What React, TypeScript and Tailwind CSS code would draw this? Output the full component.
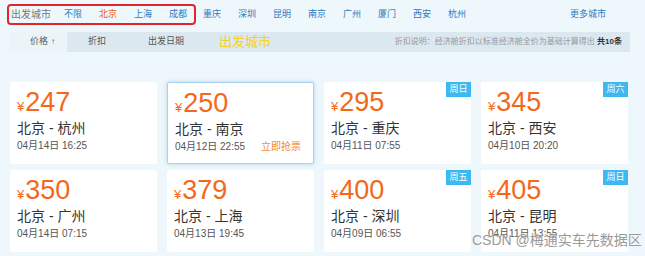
import React from "react";

const FONT = '"Liberation Sans", "Noto Sans CJK SC", sans-serif';

const boxedCities = [
  { name: "不限", active: false },
  { name: "北京", active: true },
  { name: "上海", active: false },
  { name: "成都", active: false },
];
const otherCities = ["重庆", "深圳", "昆明", "南京", "广州", "厦门", "西安", "杭州"];

type Flight = {
  price: number;
  route: string;
  date: string;
  badge?: string;
  highlight?: boolean;
};

const flights: Flight[] = [
  { price: 247, route: "北京 - 杭州", date: "04月14日 16:25" },
  { price: 250, route: "北京 - 南京", date: "04月12日 22:55", highlight: true },
  { price: 295, route: "北京 - 重庆", date: "04月11日 07:55", badge: "周日" },
  { price: 345, route: "北京 - 西安", date: "04月10日 20:20", badge: "周六" },
  { price: 350, route: "北京 - 广州", date: "04月14日 07:15" },
  { price: 379, route: "北京 - 上海", date: "04月13日 19:45" },
  { price: 400, route: "北京 - 深圳", date: "04月09日 06:55", badge: "周五" },
  { price: 405, route: "北京 - 昆明", date: "04月11日 13:55", badge: "周日" },
];

const FlightCard = ({ f }: { f: Flight }) => (
  <div
    className={[
      "relative h-[82px] bg-white rounded-[2px] px-[7px] pt-[7px]",
      f.highlight
        ? "border border-[#a8d3ee] shadow-[0_0_4px_rgba(120,180,220,0.5)]"
        : "",
    ].join(" ")}
  >
    {f.badge && (
      <span className="absolute right-0 top-0 w-[25px] h-[15px] bg-[#3db8f0] text-white text-[9px] leading-[15px] text-center">
        {f.badge}
      </span>
    )}
    <div className="flex items-baseline h-[27px] text-[#f2691c]">
      <span className="text-[13px] leading-none mr-[1px]">¥</span>
      <span
        className="text-[27px] leading-none"
        style={{ fontFamily: '"Liberation Sans Narrow", "Liberation Sans", sans-serif' }}
      >
        {f.price}
      </span>
    </div>
    <div className="mt-[3px] text-[14px] leading-[18px] text-[#333]">{f.route}</div>
    <div className="mt-[2px] flex items-center justify-between text-[10px] leading-[14px] text-[#555]">
      <span>{f.date}</span>
      {f.highlight && <span className="text-[#f0873a] mr-[5px]">立即抢票</span>}
    </div>
  </div>
);

export default function App() {
  return (
    <div
      className="w-[645px] h-[256px] overflow-hidden bg-[#eef7fc] relative"
      style={{ fontFamily: FONT }}
    >
      {/* city nav */}
      <div className="h-[32px] pl-[7px] pt-[4px] flex items-start text-[9px]">
        <div className="w-[189px] h-[21px] border-2 border-[#e3262b] rounded-[4px] flex items-center pl-[2px] shrink-0 overflow-hidden">
          <span className="w-[53px] shrink-0 text-[#777] text-[10px]">出发城市</span>
          {boxedCities.map((c) => (
            <span
              key={c.name}
              className={[
                "w-[35px] shrink-0",
                c.active ? "text-[#ef5a18]" : "text-[#2d7bc0]",
              ].join(" ")}
            >
              {c.name}
            </span>
          ))}
        </div>
        <div className="ml-[7px] h-[21px] flex items-center">
          {otherCities.map((c) => (
            <span key={c} className="w-[35px] shrink-0 text-[#2d7bc0]">
              {c}
            </span>
          ))}
        </div>
        <div className="ml-[87px] h-[21px] flex items-center text-[#2d7bc0]">更多城市</div>
      </div>

      {/* sort bar */}
      <div className="ml-[10px] w-[620px] h-[20px] bg-[#dbe8ef] flex items-center text-[9px] text-[#555]">
        <div className="w-[57px] h-full bg-[#eaf4f9] flex items-center pl-[20px]">
          价格 <span className="ml-[3px] text-[8px]">↑</span>
        </div>
        <span className="ml-[21px]">折扣</span>
        <span className="ml-[42px]">出发日期</span>
        <span className="ml-[35px] text-[13px] text-[#f6d21c]">出发城市</span>
        <span className="ml-auto mr-[8px] text-[8px] text-[#999]">
          折扣说明：经济舱折扣以标准经济舱全价为基础计算得出{" "}
          <span className="text-[#333] font-bold">共10条</span>
        </span>
      </div>

      {/* cards */}
      <div className="ml-[10px] mt-[30px] grid grid-cols-[repeat(4,147px)] gap-x-[10px] gap-y-[6px]">
        {flights.map((f) => (
          <FlightCard key={f.price} f={f} />
        ))}
      </div>

      {/* watermark */}
      <div className="absolute left-[472px] top-[230px] text-[14px] text-[#9a9a9a] whitespace-nowrap [text-shadow:0_0_2px_#fff]">
        CSDN @梅通实车先数据区
      </div>
    </div>
  );
}
